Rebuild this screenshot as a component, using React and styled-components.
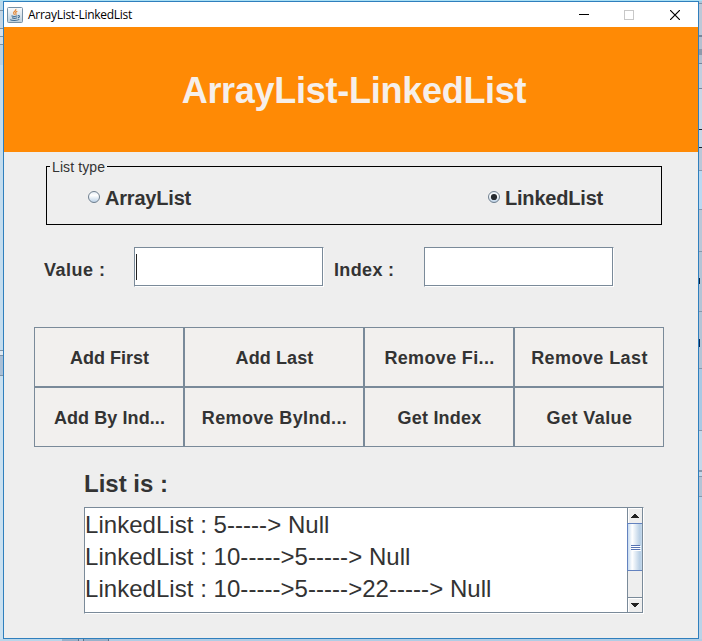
import React from 'react';
import styled, { createGlobalStyle } from 'styled-components';

const GlobalStyle = createGlobalStyle`
  * { box-sizing: border-box; }
  body { margin: 0; overflow: hidden; font-family: "Liberation Sans", Arial, sans-serif; color: #333; }
`;

const Desktop = styled.div`
  width: 702px;
  height: 641px;
  display: grid;
  grid-template-columns: 3px 696px 3px;
  grid-template-rows: 1px 638px 2px;
  background: #b4cfe6;
`;

const TopEdge = styled.div`
  grid-column: 1 / -1;
  background: #a9e0f5;
`;

const LeftEdge = styled.div`
  background: linear-gradient(
    #b9d9ec 0 9px, #7f93a6 9px 10px, #c4d6e6 10px 27px, #7f93a6 27px 28px,
    #d5e2ee 28px 35px, #7f93a6 35px 36px, #cfdde9 36px 43px, #7f93a6 43px 44px,
    #b9d2e6 44px 64px, #c3dcee 64px 349px, #7f93a6 349px 350px, #dfe9f2 350px 354px,
    #7f93a6 354px 355px, #a9bfd6 355px 374px, #7f93a6 374px 375px, #c9e0f0 375px
  );
`;

const RightEdge = styled.div`
  background:
    linear-gradient(#0a2340, #0a2340) 0 277px / 1px 6px no-repeat,
    linear-gradient(#0a2a58, #0a2a58) 0 338px / 1px 8px no-repeat,
    linear-gradient(
      #a9c8de 0 2px, #7f93a6 2px 3px, #bcc8d8 3px 34px, #75869b 34px 36px,
      #b4c0d0 36px 48px, #8d99ab 48px 54px, #b4c0d0 54px 62px, #75869b 62px 63px,
      #c0cedf 63px 87px, #75869b 87px 88px, #c8d6e6 88px 128px, #17202c 128px 129px,
      #c8d6e6 129px 146px, #17202c 146px 147px, #b9c7d8 147px 169px, #8498ac 169px 170px,
      #b9d9f2 170px 208px, #8498ac 208px 209px, #b9c7d8 209px 250px, #8498ac 250px 251px,
      #b3c4d6 251px 310px, #8498ac 310px 311px, #b3c4d6 311px 367px, #8498ac 367px 368px,
      #a9c9e4 368px 429px, #8498ac 429px 430px, #c3d8ea 430px 469px, #8498ac 469px 471px,
      #c3d8ea 471px 475px, #8498ac 475px 476px, #b3c4d6 476px 495px, #8498ac 495px 496px,
      #b9d3e8 496px
    );
`;

const BottomEdge = styled.div`
  grid-column: 1 / -1;
  background: linear-gradient(90deg,
    #b9d6ea 0 62px, #98b2cb 62px 78px, #5c748c 78px 79px, #a9c0d8 79px 83px,
    #5c748c 83px 84px, #98b2cb 84px 108px, #5c748c 108px 109px, #b0cde5 109px
  );
`;

const Window = styled.main`
  border: 1px solid #2f7fbd;
  background: #eee;
  display: flex;
  flex-direction: column;
`;

const TitleBar = styled.header`
  height: 25px;
  flex: none;
  background: #fff;
  display: flex;
  align-items: center;
  padding-left: 3px;
`;

const WindowTitle = styled.span`
  flex: 1;
  margin-left: 5px;
  font: 12px/24px "Open Sans", "Noto Sans", sans-serif;
  letter-spacing: -0.28px;
  color: #000;
`;

const WindowControl = styled.span`
  width: 46px;
  height: 25px;
  display: grid;
  place-items: center;
  svg { display: block; }
`;

const Banner = styled.h1`
  margin: 0;
  height: 125px;
  flex: none;
  background: #ff8a05;
  color: #f6efea;
  text-align: center;
  font-size: 36px;
  letter-spacing: -0.27px;
  line-height: 127px;
  padding-left: 6px;
`;

const ListType = styled.fieldset`
  margin: 6px 36px 0 42px;
  padding: 0 0 0 41px;
  min-width: 0;
  height: 67px;
  border: 1px solid #000;
  display: grid;
  grid-template-columns: 400px 1fr;
  align-items: start;
  color: #333;
`;

const Legend = styled.legend`
  margin-left: -38px;
  padding: 2px 2px 0;
  width: 57px;
  height: 16px;
  white-space: nowrap;
  font-size: 14px;
  letter-spacing: 0.1px;
  line-height: 14px;
`;

const Option = styled.label`
  display: flex;
  align-items: center;
  gap: 5px;
  margin-top: 11px;
  height: 24px;
  font-size: 20px;
  font-weight: bold;
  letter-spacing: -0.2px;
  line-height: 24px;
`;

const OptionText = styled.span`
  padding-top: 2px;
`;

const Fields = styled.div`
  display: grid;
  grid-template-columns: 90px 200px 90px 190px;
  margin: 22px 0 0 40px;
  height: 40px;
`;

const FieldLabel = styled.label`
  font-size: 18px;
  font-weight: bold;
  letter-spacing: ${(p) => p.$spacing}px;
  line-height: 46px;
  white-space: pre;
`;

const Field = styled.div`
  width: 190px;
  height: 40px;
  background: #fff;
  border: 1px solid #7a8a99;
  box-shadow: inset -1px -1px #7a8a99;
  border-right-color: #fff;
  border-bottom-color: #fff;
  padding: 6px 0 0 1px;
`;

const Caret = styled.span`
  display: block;
  width: 1px;
  height: 26px;
  background: #222;
`;

const Actions = styled.div`
  display: grid;
  grid-template-columns: 150px 180px 150px 150px;
  grid-auto-rows: 60px;
  margin: 40px 0 0 30px;
`;

const Action = styled.button`
  margin: 0;
  padding: 2px 0 0 1px;
  border: 1px solid #7a8a99;
  border-radius: 0;
  background: #f2f0ee;
  color: #333;
  font: bold 18px "Liberation Sans", Arial, sans-serif;
  letter-spacing: ${(p) => p.$spacing}px;
  white-space: nowrap;
`;

const ListHeading = styled.h2`
  margin: 20px 0 0 80px;
  height: 40px;
  font-size: 24px;
  line-height: 34px;
`;

const Output = styled.section`
  display: flex;
  width: 560px;
  height: 107px;
  margin-left: 80px;
  background: #fff;
  border: 1px solid #7a8a99;
  border-right-color: #fff;
  border-bottom-color: #fff;
  box-shadow: inset -1px -1px #7a8a99;
`;

const Lines = styled.div`
  flex: 1;
  padding-top: 1px;
  font-size: 24px;
  letter-spacing: 0.04px;
  line-height: 32px;
  white-space: nowrap;
`;

const ScrollBar = styled.div`
  width: 16px;
  height: 105px;
  display: flex;
  flex-direction: column;
  border-left: 1px solid #7a8a99;
  border-right: 1px solid #7a8a99;
  border-bottom: 1px solid #7a8a99;
  background: #eee;
`;

const ScrollButton = styled.div`
  height: 15px;
  flex: none;
  display: grid;
  place-items: center;
  border-top: ${(p) => (p.$lower ? '1px solid #7a8a99' : '0')};
  box-shadow: inset 1px 1px #fff;
  svg { display: block; }
`;

const Thumb = styled.div`
  height: 48px;
  flex: none;
  margin: 0 0 0 -1px;
  border: 1px solid #6382bf;
  border-right: 0;
  background: linear-gradient(90deg, #c8dcf0 0, #fff 30%, #b8cfe5 85%, #c5d9ec);
  display: flex;
  flex-direction: column;
  align-items: center;
  justify-content: center;
  gap: 1px;
`;

const Grip = styled.span`
  width: 9px;
  height: 1px;
  background: #5674b4;
  box-shadow: 1px 1px #fff;
`;

const Track = styled.div`
  flex: 1;
`;

const JavaIcon = () => (
  <svg width="16" height="16" viewBox="0 0 16 16" fill="none">
    <defs>
      <linearGradient id="cup-bg" x2="0" y2="1">
        <stop stopColor="#fbfcfd" />
        <stop offset="1" stopColor="#bdcfdc" />
      </linearGradient>
    </defs>
    <rect x=".5" y=".5" width="15" height="15" rx="1" fill="url(#cup-bg)" stroke="#7891a5" />
    <path d="M8.800 2c.8 2-2.500 2.300-2.200 4 .1.700.8 1 .9 1.900M10.300 4.200c-1.300.6-2.200 1.300-1.400 2.300.4.600.2 1-.3 1.400" stroke="#e58a3a" strokeWidth="1.200" />
    <path d="M4.500 8.800c1.500.8 4.500.6 6 0M5 10.800c1.300.6 3.800.5 5 0M11 8.500c2-.3 1.900 1.900-.2 2.400M3.200 12.600c1.500 1.200 7.300 1.100 9.100-.2" stroke="#426f94" strokeWidth="1.100" />
  </svg>
);

const Radio = ({ checked }) => (
  <svg width="12" height="12" viewBox="0 0 12 12">
    <defs>
      <linearGradient id="radio-bg" x2="0" y2="1">
        <stop stopColor="#e1ebf5" />
        <stop offset=".35" stopColor="#fff" />
        <stop offset="1" stopColor="#b8cfe5" />
      </linearGradient>
    </defs>
    <circle cx="6" cy="6" r="5.500" fill="url(#radio-bg)" stroke="#6f7f8e" />
    {checked && <circle cx="6" cy="6" r="3.100" fill="#262b30" />}
  </svg>
);

const Arrow = ({ down }) => (
  <svg width="8" height="4" viewBox="0 0 8 4" shapeRendering="crispEdges">
    <path d={down ? 'M0 0h8v1h-1v1h-1v1h-1v1h-2v-1h-1v-1h-1v-1h-1z' : 'M3 0h2v1h1v1h1v1h1v1h-8v-1h1v-1h1v-1h1z'} fill="#222" />
  </svg>
);

const actions = [
  { name: 'Add First', spacing: 0 },
  { name: 'Add Last', spacing: 0.1 },
  { name: 'Remove Fi...', spacing: 0.35 },
  { name: 'Remove Last', spacing: 0.42 },
  { name: 'Add By Ind...', spacing: 0.08 },
  { name: 'Remove ByInd...', spacing: 0.35 },
  { name: 'Get Index', spacing: 0.2 },
  { name: 'Get Value', spacing: 0.42 },
];

const lines = [
  'LinkedList : 5-----> Null',
  'LinkedList : 10----->5-----> Null',
  'LinkedList : 10----->5----->22-----> Null',
];

export default function App() {
  return (
    <>
      <GlobalStyle />
      <Desktop>
        <TopEdge />
        <LeftEdge />
        <Window>
          <TitleBar>
            <JavaIcon />
            <WindowTitle>ArrayList-LinkedList</WindowTitle>
            <WindowControl>
              <svg width="10" height="10" overflow="visible"><path d="M1 4.500h10" stroke="#000" /></svg>
            </WindowControl>
            <WindowControl>
              <svg width="10" height="10"><rect x=".5" y=".5" width="9" height="9" fill="none" stroke="#c8c8c8" /></svg>
            </WindowControl>
            <WindowControl>
              <svg width="10" height="10"><path d="M0 0l10 10M10 0L0 10" stroke="#000" strokeWidth="1.200" /></svg>
            </WindowControl>
          </TitleBar>
          <Banner>ArrayList-LinkedList</Banner>
          <ListType>
            <Legend>List type</Legend>
            <Option><Radio /><OptionText>ArrayList</OptionText></Option>
            <Option><Radio checked /><OptionText>LinkedList</OptionText></Option>
          </ListType>
          <Fields>
            <FieldLabel $spacing={0.48}>Value :</FieldLabel>
            <Field><Caret /></Field>
            <FieldLabel $spacing={0.35}>Index :</FieldLabel>
            <Field />
          </Fields>
          <Actions>
            {actions.map(({ name, spacing }) => (
              <Action key={name} $spacing={spacing}>{name}</Action>
            ))}
          </Actions>
          <ListHeading>List is :</ListHeading>
          <Output>
            <Lines>{lines.map((line) => <div key={line}>{line}</div>)}</Lines>
            <ScrollBar>
              <ScrollButton><Arrow /></ScrollButton>
              <Thumb><Grip /><Grip /><Grip /></Thumb>
              <Track />
              <ScrollButton $lower><Arrow down /></ScrollButton>
            </ScrollBar>
          </Output>
        </Window>
        <RightEdge />
        <BottomEdge />
      </Desktop>
    </>
  );
}
